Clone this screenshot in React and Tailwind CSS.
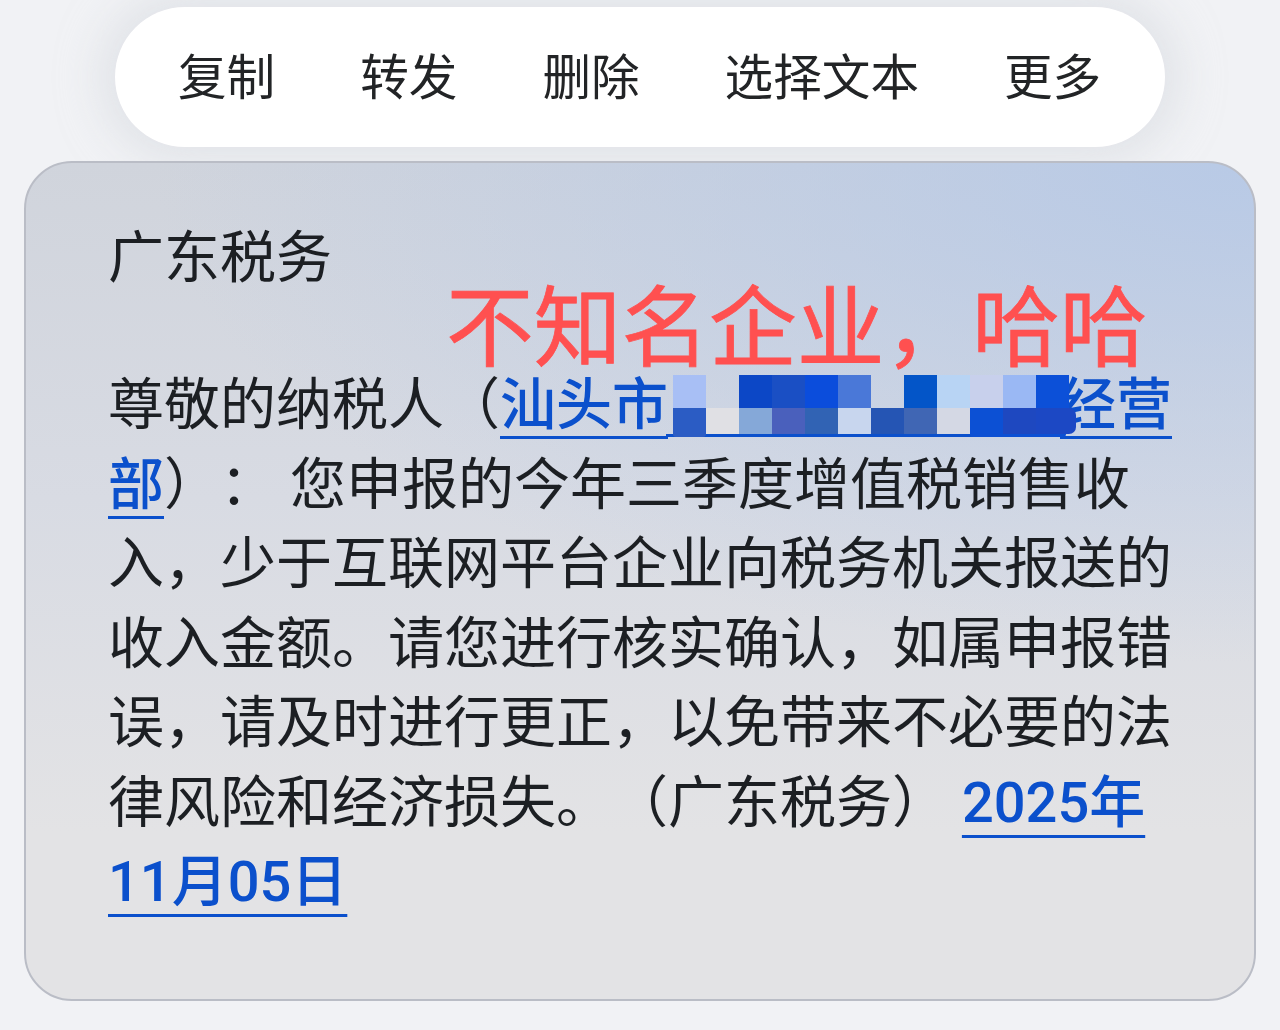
const top = ["bg-[#a8bff5]", "", "bg-[#0c47c6]", "bg-[#1a4fc4]", "bg-[#0b4ddc]", "bg-[#4a78d8]", "", "bg-[#0355c8]", "bg-[#b8d4f4]", "bg-[#c8d0ec]", "bg-[#9ab8f4]", "bg-[#0c50d8]"];
const bottom = ["bg-[#2b5cc4]", "bg-[#e0e0e4]", "bg-[#85a8d8]", "bg-[#4a60bc]", "bg-[#3163b4]", "bg-[#c8d6ee]", "bg-[#2555b4]", "bg-[#4066b4]", "bg-[#d4d8e4]", "bg-[#0c50d4]", "bg-[#1e48c0]", "bg-[#1c48c4]"];

const linkBase = "text-[#0b50cc] font-medium underline decoration-[3px] [text-decoration-skip-ink:none]";

function Mosaic() {
  return (
    <span className="relative inline-block w-[392px] h-[56px] align-baseline">
      <span className="absolute left-[-2px] right-[-2px] top-[66px] h-[3px] bg-[#0b50cc]" />
      <span className="absolute left-[5px] top-[7px] w-[396px] grid grid-cols-12 grid-rows-[33px_26px]">
        {top.map((c, i) => <span key={`t${i}`} className={c} />)}
        {bottom.map((c, i) => <span key={`b${i}`} className={c} />)}
      </span>
      <span className="absolute left-[5px] top-[66px] w-[33px] h-[3px] rounded-b-full bg-[#2b5cc4]" />
      <span className="absolute left-[302px] top-[66px] w-[96px] h-[3px] rounded-b-full bg-[#0c50d4]" />
      <span className="absolute left-[401px] top-[40px] w-[7px] h-[26px] rounded-r-full bg-[#1c48c4]" />
    </span>
  );
}

export default function App() {
  return (
    <div className="w-[1280px] h-[1030px] overflow-hidden bg-[#f1f2f5] flex flex-col items-start pt-[7px] [font-family:Roboto,'Noto_Sans_CJK_SC',sans-serif] [text-spacing-trim:space-all]">
      <div className="ml-[115px] w-[1050px] h-[140px] rounded-full bg-white pl-[63px] pt-[4px] flex items-center gap-[85px] text-[48.6px] leading-[60px] text-[#222426] shadow-[0_0_40px_16px_rgba(214,216,222,0.55)]">
        <span>复制</span>
        <span>转发</span>
        <span>删除</span>
        <span>选择文本</span>
        <span>更多</span>
      </div>
      <div className="relative z-10 ml-[24px] mt-[14px] w-[1232px] h-[840px] rounded-[48px] border-2 border-[#babdc6] bg-[radial-gradient(ellipse_1100px_500px_at_100%_0%,rgba(180,200,232,0.85),rgba(180,200,232,0)),linear-gradient(180deg,#d0d4dc_0%,#d8dbe3_40%,#e3e3e5_80%)] pl-[82px] pr-[80px] pt-[56px] text-[56px] leading-[79.5px] text-[#1c1f23]">
        <div className="mb-[67.5px]">广东税务</div>
        <div className="w-[1072px]">
          尊敬的纳税人（<span className={`${linkBase} underline-offset-[12px]`}>汕头市<Mosaic />经营部</span>）： 您申报的今年三季度增值税销售收入，少于互联网平台企业向税务机关报送的收入金额。请您进行核实确认，如属申报错误，请及时进行更正，以免带来不必要的法律风险和经济损失。（广东税务） <span className={`${linkBase} underline-offset-[13px]`}>2025年11月05日</span>
        </div>
        <div className="absolute left-[420px] top-[111px] text-[87.7px] leading-[110px] text-[#ff5050] [-webkit-text-stroke:0.8px_#ff5050] whitespace-nowrap">不知名企业，哈哈</div>
      </div>
    </div>
  );
}
